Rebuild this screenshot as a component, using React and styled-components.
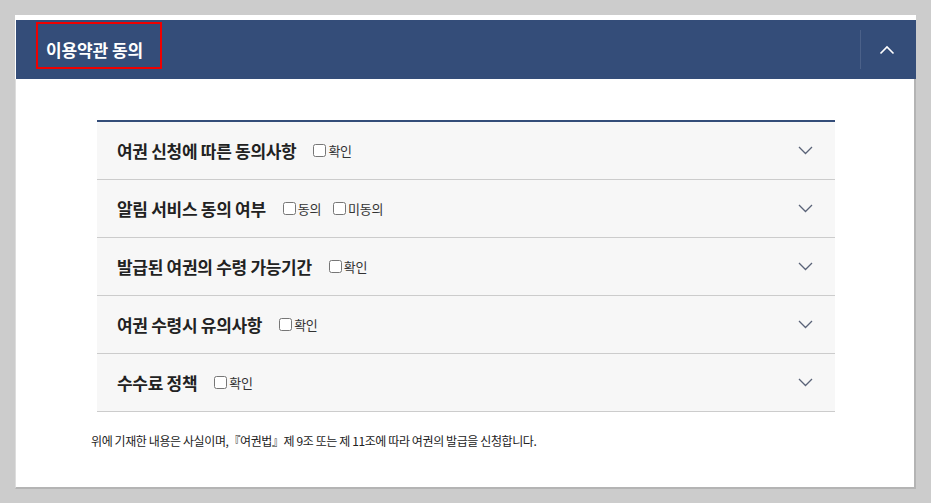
import React, { useState } from 'react';
import styled, { createGlobalStyle } from 'styled-components';

const GlobalStyle = createGlobalStyle`
  html, body {
    margin: 0;
    padding: 0;
    background: #cccccc;
  }
  body {
    font-family: 'Noto Sans CJK KR', 'Noto Sans', sans-serif;
    color: #222;
  }
`;

const Page = styled.div`
  padding: 15px 0 0 15px;
  height: 489px;
  box-sizing: border-box;
`;

const Panel = styled.section`
  width: 901px;
  background: #fff;
  padding-top: 5px;
  box-sizing: border-box;
`;

const Header = styled.div`
  position: relative;
  display: flex;
  align-items: center;
  height: 59px;
  margin-left: 1px;
  background: #344d79;
`;

const Title = styled.h2`
  flex: 1;
  margin: 0 0 0 30px;
  font-size: 17px;
  font-weight: 700;
  letter-spacing: -0.1px;
  color: #fff;
`;

const Highlight = styled.div`
  position: absolute;
  left: 20px;
  top: 2px;
  width: 122px;
  height: 43px;
  border: 2px solid #f00000;
`;

const ToggleButton = styled.button`
  display: flex;
  align-items: center;
  justify-content: center;
  width: 52px;
  height: 39px;
  margin-right: 4px;
  padding: 0;
  border: none;
  border-left: 1px solid #4b6189;
  background: transparent;
  cursor: pointer;
`;

const Body = styled.div`
  border-left: 1px solid #dddddd;
  border-right: 2px solid #b4b4b4;
  border-bottom: 2px solid #b4b4b4;
  padding: 41px 79px 0 81px;
  height: 410px;
  box-sizing: border-box;
`;

const List = styled.ul`
  list-style: none;
  margin: 0;
  padding: 0;
  border-top: 2px solid #344d79;
`;

const Row = styled.li`
  display: flex;
  align-items: center;
  height: 57px;
  padding: 0 22px 0 20px;
  background: #f7f7f7;
  border-bottom: 1px solid #cccccc;
`;

const RowTitle = styled.span`
  font-size: 17px;
  font-weight: 700;
  letter-spacing: -0.3px;
  color: #222;
  margin-right: 17px;
`;

const Check = styled.label`
  display: flex;
  align-items: center;
  margin-right: 12px;
  font-size: 13px;
  letter-spacing: -0.3px;
  color: #333;
  cursor: pointer;

  input {
    width: 13px;
    height: 13px;
    margin: 0 2px 0 0;
  }
`;

const Chevron = styled.span`
  margin-left: auto;
  display: flex;
`;

const Notice = styled.p`
  margin: 20px 0 0 -6px;
  font-size: 12px;
  letter-spacing: -0.4px;
  color: #222;
`;

const terms = [
  { title: '여권 신청에 따른 동의사항', options: ['확인'] },
  { title: '알림 서비스 동의 여부', options: ['동의', '미동의'] },
  { title: '발급된 여권의 수령 가능기간', options: ['확인'] },
  { title: '여권 수령시 유의사항', options: ['확인'] },
  { title: '수수료 정책', options: ['확인'] },
];

const ArrowDown = () => (
  <svg width="15" height="9" viewBox="0 0 15 9">
    <path d="M1 1l6.5 6.5L14 1" fill="none" stroke="#5a6378" strokeWidth="1.3" />
  </svg>
);

const ArrowUp = () => (
  <svg width="16" height="10" viewBox="0 0 16 10">
    <path d="M1.5 8.5L8 2l6.5 6.5" fill="none" stroke="#fff" strokeWidth="1.6" />
  </svg>
);

const App = () => {
  const [checked, setChecked] = useState({});

  const toggle = (key) => setChecked({ ...checked, [key]: !checked[key] });

  return (
    <Page>
      <GlobalStyle />
      <Panel>
        <Header>
          <Title>이용약관 동의</Title>
          <Highlight />
          <ToggleButton aria-label="접기">
            <ArrowUp />
          </ToggleButton>
        </Header>
        <Body>
          <List>
            {terms.map((term, i) => (
              <Row key={term.title}>
                <RowTitle>{term.title}</RowTitle>
                {term.options.map((opt) => (
                  <Check key={opt}>
                    <input
                      type="checkbox"
                      checked={!!checked[`${i}-${opt}`]}
                      onChange={() => toggle(`${i}-${opt}`)}
                    />
                    {opt}
                  </Check>
                ))}
                <Chevron>
                  <ArrowDown />
                </Chevron>
              </Row>
            ))}
          </List>
          <Notice>
            위에 기재한 내용은 사실이며,『여권법』제 9조 또는 제 11조에 따라 여권의 발급을 신청합니다.
          </Notice>
        </Body>
      </Panel>
    </Page>
  );
};

export default App;
